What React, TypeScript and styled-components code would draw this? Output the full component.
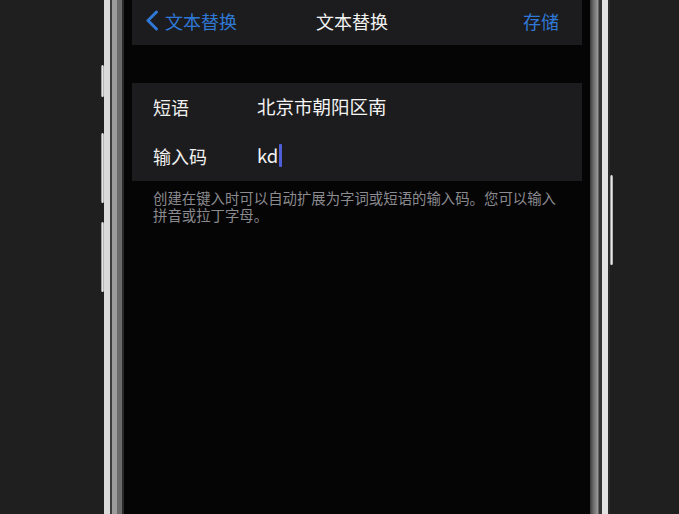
import React from "react";
import styled, { createGlobalStyle } from "styled-components";

const Global = createGlobalStyle`
  html, body {
    margin: 0;
    padding: 0;
    background: #1f1f20;
    overflow: hidden;
  }
  body {
    font-family: "Noto Sans CJK SC", "Noto Sans", sans-serif;
  }
`;

const Stage = styled.div`
  display: flex;
  height: 514px;
  padding-left: 101px;
  background: #1f1f20;
`;

const ButtonRail = styled.div<{ $top: number }>`
  display: flex;
  flex-direction: column;
  width: 3px;
  padding-top: ${(p) => p.$top}px;
`;

const SideButton = styled.div<{ $h: number; $gap?: number }>`
  width: 3px;
  height: ${(p) => p.$h}px;
  margin-top: ${(p) => p.$gap ?? 0}px;
  border-radius: 1.5px;
  background: linear-gradient(90deg, #7a7a7a, #e6e6e6 50%, #9a9a9a);
`;

const LeftBezel = styled.div`
  width: 20px;
  background: linear-gradient(
    90deg,
    #d9d9d9 0 6px,
    #3c3c3c 6px 8px,
    #9c9c9c 8px 13px,
    #6a6a6a 13px 18px,
    #2a2a2a 18px 20px
  );
`;

const RightBezel = styled.div`
  width: 20px;
  background: linear-gradient(
    90deg,
    #3a3a3a 0,
    #666 3px,
    #9a9a9a 8px,
    #333 9px 12px,
    #e2e2e2 12px 18px,
    #2a2a2a 18px 20px
  );
`;

const Screen = styled.div`
  width: 466px;
  display: flex;
  flex-direction: column;
  padding: 0 8px;
  box-sizing: border-box;
  background: #050506;
`;

const NavBar = styled.div`
  height: 45px;
  display: grid;
  grid-template-columns: 1fr auto 1fr;
  align-items: center;
  background: #1c1c1e;
  padding: 0 23px 4px 13px;
  box-sizing: border-box;
`;

const BackButton = styled.div`
  display: flex;
  align-items: center;
  gap: 6px;
  color: #2f78d6;
  font-size: 18px;
  line-height: 1;
`;

const NavTitle = styled.div`
  color: #f2f2f2;
  font-size: 18px;
  font-weight: 400;
  line-height: 1;
`;

const NavAction = styled.div`
  justify-self: end;
  color: #2f78d6;
  font-size: 18px;
  line-height: 1;
`;

const Group = styled.div`
  margin-top: 38px;
  background: #1c1c1e;
  display: flex;
  flex-direction: column;
`;

const Row = styled.div`
  height: 49px;
  display: grid;
  grid-template-columns: 104px 1fr;
  align-items: center;
  padding-left: 21px;
  padding-bottom: 2px;
  box-sizing: border-box;
`;

const Label = styled.div`
  color: #f0f0f0;
  font-size: 18px;
  line-height: 1;
`;

const Value = styled.div`
  display: flex;
  align-items: center;
  color: #f4f4f4;
  font-size: 18.5px;
  line-height: 1;
`;

const Caret = styled.span`
  display: inline-block;
  width: 3px;
  height: 23px;
  margin-left: 1px;
  background: #4c5fd8;
  border-radius: 1px;
`;

const Footnote = styled.p`
  margin: 8px 0 0;
  padding: 0 21px;
  color: #8b8b8f;
  font-size: 14.4px;
  line-height: 17px;
`;

const Chevron = () => (
  <svg width="14" height="21" viewBox="0 0 14 21" fill="none">
    <path
      d="M11.5 2 L3 10.5 L11.5 19"
      stroke="#2f78d6"
      strokeWidth="3"
      strokeLinecap="round"
      strokeLinejoin="round"
    />
  </svg>
);

export default function App() {
  return (
    <>
      <Global />
      <Stage>
        <ButtonRail $top={65}>
          <SideButton $h={32} />
          <SideButton $h={70} $gap={36} />
          <SideButton $h={70} $gap={19} />
        </ButtonRail>
        <LeftBezel />
        <Screen>
          <NavBar>
            <BackButton>
              <Chevron />
              文本替换
            </BackButton>
            <NavTitle>文本替换</NavTitle>
            <NavAction>存储</NavAction>
          </NavBar>
          <Group>
            <Row>
              <Label>短语</Label>
              <Value>北京市朝阳区南</Value>
            </Row>
            <Row>
              <Label>输入码</Label>
              <Value>
                kd
                <Caret />
              </Value>
            </Row>
          </Group>
          <Footnote>
            创建在键入时可以自动扩展为字词或短语的输入码。您可以输入拼音或拉丁字母。
          </Footnote>
        </Screen>
        <RightBezel />
        <ButtonRail $top={175}>
          <SideButton $h={90} />
        </ButtonRail>
      </Stage>
    </>
  );
}
